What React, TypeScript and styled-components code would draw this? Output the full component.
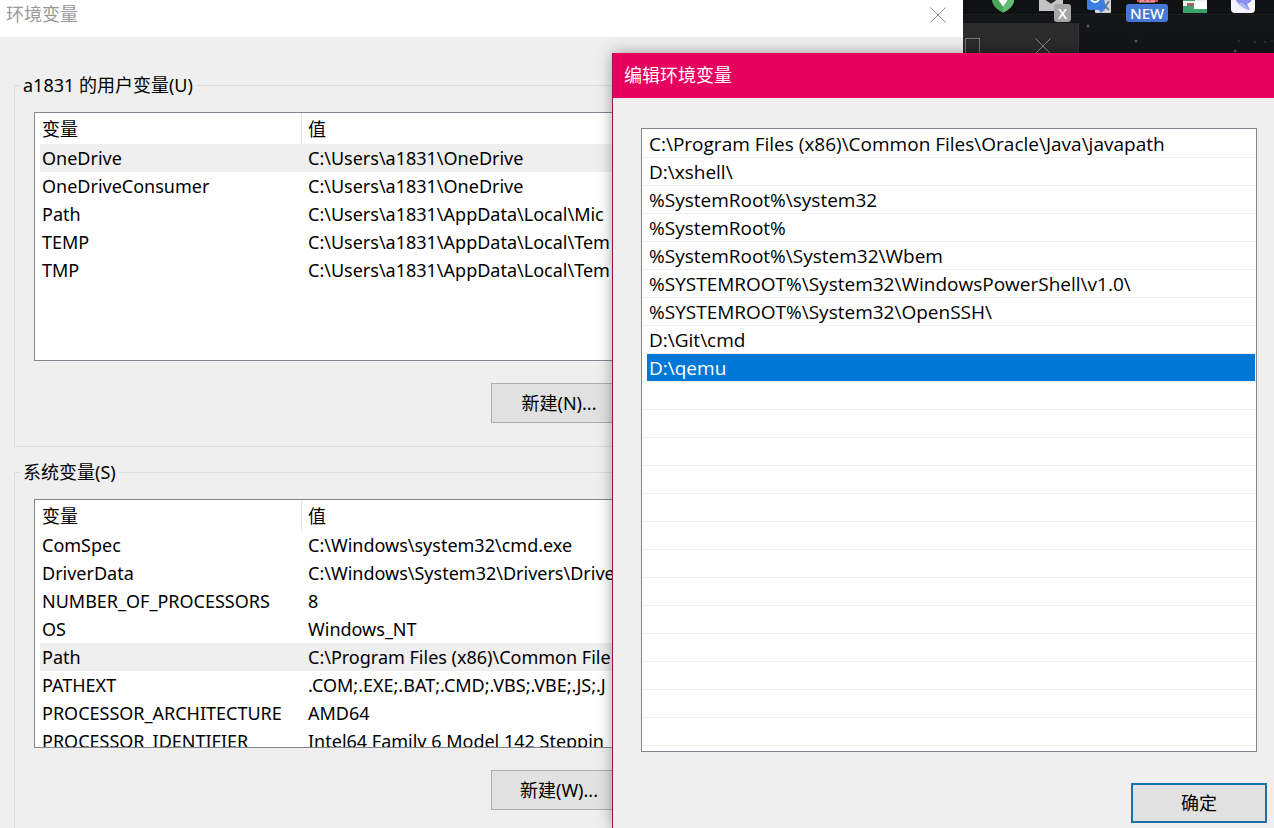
import React from "react";
import styled, { createGlobalStyle } from "styled-components";

const GlobalStyle = createGlobalStyle`
  *, *::before, *::after { box-sizing: border-box; }
  body {
    margin: 0;
    font-family: "Noto Sans", "Noto Sans CJK SC", sans-serif;
    font-size: 18px;
    line-height: 28px;
    color: #000;
  }
  button { font: inherit; color: inherit; }
`;

const Desktop = styled.main`
  position: relative;
  height: 100vh;
  overflow: hidden;
  background: #131518;
`;

const ExtensionBar = styled.div`
  display: flex;
  justify-content: flex-end;
  gap: 24px;
  height: 15px;
  padding-right: 19px;
  background: #101113;
  border-bottom: 1px solid #1d1f22;
`;

const Extension = styled.div`
  position: relative;
  width: 24px;
  height: 13px;

  svg { display: block; }
`;

const Badge = styled.span<{ $tone: string; $left: number }>`
  position: absolute;
  top: 4px;
  left: ${(p) => p.$left}px;
  height: 18px;
  padding: 0 4px;
  border-radius: 3px;
  background: ${(p) => p.$tone};
  color: #fff;
  font-size: 15px;
  font-weight: 500;
  line-height: 18px;
`;

const Stars = styled.svg`
  position: absolute;
  top: 16px;
  right: 0;
`;

const BackWindow = styled.div`
  position: absolute;
  top: 23px;
  right: 195px;
  display: flex;
  justify-content: space-between;
  width: 116px;
  height: 60px;
  padding: 15px 27px 0 2px;
  background: #2b2b2b;
  border-right: 1px solid #3a3a3a;
`;

const MainWindow = styled.section`
  position: absolute;
  top: 0;
  left: 0;
  right: 311px;
  min-height: 100%;
  background: #efefef;
`;

const MainTitleBar = styled.header`
  display: flex;
  justify-content: space-between;
  height: 37px;
  padding: 0 17px 0 6px;
  background: #fff;
  color: #999;
`;

const Title = styled.h1`
  margin: 0;
  font-size: 18px;
  font-weight: 400;
  line-height: 28px;
`;

const CloseButton = styled.button`
  display: flex;
  align-items: center;
  height: 30px;
  padding: 0;
  border: 0;
  background: none;
`;

const Groups = styled.div`
  display: flex;
  flex-direction: column;
  gap: 11px;
  padding: 34px 14px 0;
`;

const Group = styled.fieldset`
  min-width: 0;
  margin: 0;
  padding: 0 5px 23px;
  border: 1px solid #dcdcdc;
`;

const GroupName = styled.legend`
  padding: 0 3px;
`;

const VariableList = styled.div`
  height: 249px;
  margin: 13px 14px 22px;
  padding: 0 5px;
  overflow: hidden;
  background: #fff;
  border: 1px solid #828790;
`;

const VariableTable = styled.table`
  width: 100%;
  table-layout: fixed;
  border-collapse: separate;
  border-spacing: 0;
  text-align: left;
  white-space: nowrap;
`;

const HeadCell = styled.th<{ $first?: boolean }>`
  width: ${(p) => (p.$first ? "262px" : "auto")};
  height: 31px;
  padding: 0 0 0 ${(p) => (p.$first ? 2 : 6)}px;
  border-right: ${(p) => (p.$first ? "1px solid #e4e4e4" : "0")};
  font-weight: 400;
`;

const VariableRow = styled.tr<{ $active?: boolean }>`
  background: ${(p) => (p.$active ? "#efefef" : "transparent")};

  td { height: 28px; padding: 0 0 0 2px; }
  td + td { padding-left: 6px; }
`;

const GroupActions = styled.div`
  display: flex;
  padding-left: 471px;
`;

const DialogButton = styled.button<{ $primary?: boolean }>`
  width: 136px;
  height: 40px;
  padding: 0;
  background: #e1e1e1;
  border: ${(p) => (p.$primary ? "2px solid #1a6fa8" : "1px solid #adadad")};
`;

const EditWindow = styled.section`
  position: absolute;
  top: 53px;
  left: 612px;
  right: 0;
  bottom: 0;
  background: #efefef;
  border-left: 1px solid #a3104f;
  box-shadow: 0 0 14px rgba(0, 0, 0, 0.35);
`;

const EditTitleBar = styled.header`
  height: 45px;
  padding: 8px 11px;
  background: #e8005f;
  color: #fff;
`;

const EditBody = styled.div`
  display: flex;
  flex-direction: column;
  gap: 31px;
  padding: 30px 17px 0 28px;
`;

const PathList = styled.ul`
  height: 624px;
  margin: 0;
  padding: 1px 0 0;
  list-style: none;
  background: #fff;
  border: 1px solid #828790;
  font-family: "Open Sans", "Noto Sans CJK SC", sans-serif;
  font-size: 19px;
`;

const PathItem = styled.li`
  height: 28px;
  padding: 0 1px 0 5px;
  border-bottom: 1px solid #f0f0f0;
`;

const PathText = styled.span<{ $selected?: boolean }>`
  display: block;
  height: 27px;
  padding-left: 2px;
  white-space: nowrap;
  background: ${(p) => (p.$selected ? "#0078d7" : "transparent")};
  color: ${(p) => (p.$selected ? "#fff" : "inherit")};
`;

const EditActions = styled.div`
  display: flex;
  justify-content: flex-end;
  margin-right: -10px;
`;

type Variable = { name: string; value: string };

const userVariables: Variable[] = [
  { name: "OneDrive", value: "C:\\Users\\a1831\\OneDrive" },
  { name: "OneDriveConsumer", value: "C:\\Users\\a1831\\OneDrive" },
  { name: "Path", value: "C:\\Users\\a1831\\AppData\\Local\\Mic" },
  { name: "TEMP", value: "C:\\Users\\a1831\\AppData\\Local\\Tem" },
  { name: "TMP", value: "C:\\Users\\a1831\\AppData\\Local\\Tem" },
];

const systemVariables: Variable[] = [
  { name: "ComSpec", value: "C:\\Windows\\system32\\cmd.exe" },
  { name: "DriverData", value: "C:\\Windows\\System32\\Drivers\\Drive" },
  { name: "NUMBER_OF_PROCESSORS", value: "8" },
  { name: "OS", value: "Windows_NT" },
  { name: "Path", value: "C:\\Program Files (x86)\\Common File" },
  { name: "PATHEXT", value: ".COM;.EXE;.BAT;.CMD;.VBS;.VBE;.JS;.J" },
  { name: "PROCESSOR_ARCHITECTURE", value: "AMD64" },
  { name: "PROCESSOR_IDENTIFIER", value: "Intel64 Family 6 Model 142 Steppin" },
];

const paths = [
  "C:\\Program Files (x86)\\Common Files\\Oracle\\Java\\javapath",
  "D:\\xshell\\",
  "%SystemRoot%\\system32",
  "%SystemRoot%",
  "%SystemRoot%\\System32\\Wbem",
  "%SYSTEMROOT%\\System32\\WindowsPowerShell\\v1.0\\",
  "%SYSTEMROOT%\\System32\\OpenSSH\\",
  "D:\\Git\\cmd",
  "D:\\qemu",
];
const EMPTY_ROWS = 13;

function VariableGroup(props: {
  label: string;
  button: string;
  active: string;
  variables: Variable[];
}) {
  return (
    <Group>
      <GroupName>{props.label}</GroupName>
      <VariableList>
        <VariableTable>
          <thead>
            <tr>
              <HeadCell $first>变量</HeadCell>
              <HeadCell>值</HeadCell>
            </tr>
          </thead>
          <tbody>
            {props.variables.map((v) => (
              <VariableRow key={v.name} $active={v.name === props.active}>
                <td>{v.name}</td>
                <td>{v.value}</td>
              </VariableRow>
            ))}
          </tbody>
        </VariableTable>
      </VariableList>
      <GroupActions>
        <DialogButton type="button">{props.button}</DialogButton>
      </GroupActions>
    </Group>
  );
}

function Cross({ color }: { color: string }) {
  return (
    <svg width="16" height="16" viewBox="0 0 16 16" aria-hidden="true">
      <path d="M.5 .5 15.500 15.500M15.500 .5 .5 15.500" stroke={color} strokeWidth="1" fill="none" />
    </svg>
  );
}

function ExtensionIcon({ children }: { children: React.ReactNode }) {
  return (
    <svg width="24" height="13" viewBox="0 11 24 13" aria-hidden="true">
      {children}
    </svg>
  );
}

export default function App() {
  return (
    <>
      <GlobalStyle />
      <Desktop>
        <ExtensionBar>
          <Extension>
            <ExtensionIcon>
              <path d="M1 5h22v6c0 5-5 10-11 12.500C6 21 1 16 1 11Z" fill="#48a65c" />
              <path d="M12 5h11v6c0 5-5 10-11 12.500Z" fill="#62ba75" />
              <path d="M7 7l5 7 5-7" stroke="#fff" strokeWidth="4" fill="none" />
            </ExtensionIcon>
          </Extension>
          <Extension>
            <ExtensionIcon>
              <rect width="24" height="22" fill="#c3c3c3" />
              <path d="M5 8l7 5 7-5" stroke="#222" strokeWidth="3" fill="none" />
            </ExtensionIcon>
            <Badge $tone="#a6a6a6" $left={15}>X</Badge>
          </Extension>
          <Extension>
            <ExtensionIcon>
              <rect x="8" y="4" width="16" height="20" rx="1" fill="#d4d6d8" />
              <path d="M13 12l9 9M22 12l-6 9" stroke="#777c82" strokeWidth="2" />
              <path d="M0 0h15l4 19-5 5-2-3H2q-2 0-2-2Z" fill="#3d7de0" />
              <circle cx="8" cy="9" r="4" fill="none" stroke="#fff" strokeWidth="2" />
            </ExtensionIcon>
          </Extension>
          <Extension>
            <ExtensionIcon>
              <rect x="2" y="2" width="21" height="11" fill="#d94a50" />
              <path d="M5 11h4M11 11h3M16 11h4M4 13h16" stroke="#f4c9c9" strokeWidth="1" />
            </ExtensionIcon>
            <Badge $tone="#4478d6" $left={-9}>NEW</Badge>
          </Extension>
          <Extension>
            <ExtensionIcon>
              <rect width="24" height="24" fill="#eef1ee" />
              <path d="M0 17h11v3h13v4H0Z" fill="#3aa36b" />
              <path d="M0 11h12v1H0Z" fill="#3aa36b" />
              <rect x="4" y="14" width="8" height="3" fill="#a5606a" />
              <rect x="11" y="13" width="13" height="7" fill="#fff" />
            </ExtensionIcon>
          </Extension>
          <Extension>
            <ExtensionIcon>
              <rect width="24" height="24" rx="4" fill="#f4f4fa" />
              <path d="M3 8h19c-1 4-3 6-6 7l3 6c-6-1-12-5-16-13Z" fill="#8b8ff0" />
              <path d="M12 14l7 7c-4 0-9-3-12-7Z" fill="#a9b8f6" />
            </ExtensionIcon>
          </Extension>
        </ExtensionBar>
        <Stars width="195" height="37" viewBox="0 0 195 37" aria-hidden="true">
          <g fill="#55585c">
            <circle cx="9" cy="10" r="1.500" />
            <circle cx="57" cy="25" r="1.500" />
            <circle cx="156" cy="35" r="1.500" />
          </g>
          <g fill="#34373a">
            <circle cx="160" cy="25" r="1" />
            <circle cx="176" cy="26" r="1" />
            <circle cx="186" cy="26" r="1" />
            <circle cx="193" cy="25" r="1" />
          </g>
        </Stars>
        <BackWindow>
          <svg width="15" height="16" viewBox="0 0 15 16" aria-hidden="true">
            <rect x=".5" y=".5" width="14" height="15" fill="none" stroke="#777" />
          </svg>
          <Cross color="#8c8c8c" />
        </BackWindow>

        <MainWindow>
          <MainTitleBar>
            <Title>环境变量</Title>
            <CloseButton type="button" aria-label="关闭">
              <Cross color="#8c8c8c" />
            </CloseButton>
          </MainTitleBar>
          <Groups>
            <VariableGroup
              label="a1831 的用户变量(U)"
              button="新建(N)..."
              active="OneDrive"
              variables={userVariables}
            />
            <VariableGroup
              label="系统变量(S)"
              button="新建(W)..."
              active="Path"
              variables={systemVariables}
            />
          </Groups>
        </MainWindow>

        <EditWindow>
          <EditTitleBar>
            <Title as="h2">编辑环境变量</Title>
          </EditTitleBar>
          <EditBody>
            <PathList>
              {paths.map((path) => (
                <PathItem key={path}>
                  <PathText $selected={path === "D:\\qemu"}>{path}</PathText>
                </PathItem>
              ))}
              {Array.from({ length: EMPTY_ROWS }, (_, i) => (
                <PathItem key={i} />
              ))}
            </PathList>
            <EditActions>
              <DialogButton type="button" $primary>
                确定
              </DialogButton>
            </EditActions>
          </EditBody>
        </EditWindow>
      </Desktop>
    </>
  );
}
